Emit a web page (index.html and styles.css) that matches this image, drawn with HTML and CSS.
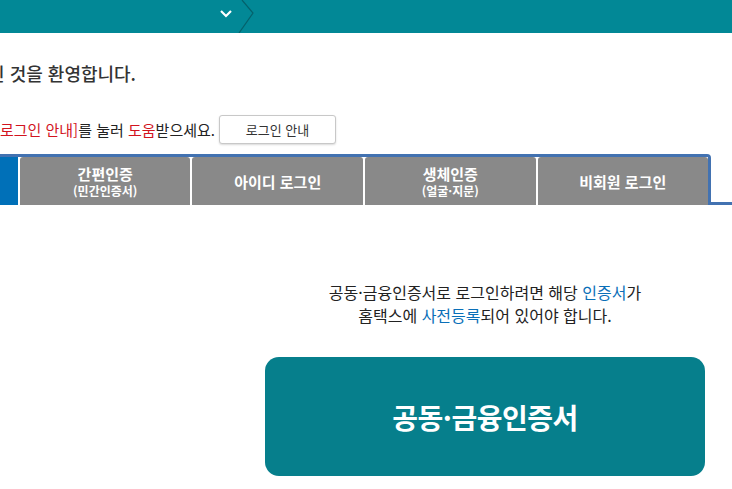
FILE: index.html
```html
<!DOCTYPE html>
<html lang="ko">
<head>
  <meta charset="UTF-8">
  <title>홈택스 로그인</title>
  <link rel="stylesheet" href="styles.css">
</head>
<body>

<div class="topbar">
  <svg class="topbar-arrows" width="260" height="33" viewBox="0 0 260 33">
    <polyline points="221,11 226,16 231,11" fill="none" stroke="#fff" stroke-width="2.2"/>
    <polyline points="242,0 253,13 239,33" fill="none" stroke="#05616b" stroke-width="1.2"/>
  </svg>
</div>

<div class="intro">
  <div class="intro-line welcome">
    <h2>홈택스에 오신 것을 환영합니다.</h2>
  </div>
  <div class="intro-line help">
    <p>로그인이 어려우시면 <span class="red">[로그인 안내]</span>를 눌러 <span class="red">도움</span>받으세요.</p>
    <button class="guide-btn">로그인 안내</button>
  </div>
</div>

<div class="tab-row">
  <div class="tabs">
    <div class="tab active"></div>
    <div class="tab">간편인증<small>(민간인증서)</small></div>
    <div class="tab big">아이디 로그인</div>
    <div class="tab">생체인증<small>(얼굴·지문)</small></div>
    <div class="tab big">비회원 로그인</div>
  </div>
  <div class="tab-rest"></div>
</div>

<div class="panel">
  <div class="panel-left"></div>
  <div class="panel-right">
    <p class="notice">공동·금융인증서로 로그인하려면 해당 <span class="blue">인증서</span>가<br>홈택스에 <span class="blue">사전등록</span>되어 있어야 합니다.</p>
    <button class="cert-btn">공동·금융인증서</button>
  </div>
</div>

</body>
</html>
```

FILE: styles.css
```css
* {
  box-sizing: border-box;
  margin: 0;
  padding: 0;
}

body {
  font-family: "Noto Sans CJK KR", "Noto Sans", sans-serif;
  color: #222;
  background: #fff;
  width: 732px;
  overflow: hidden;
}

.topbar {
  height: 33px;
  background: #028896;
}

.topbar-arrows {
  display: block;
}

.intro-line {
  display: flex;
  justify-content: flex-end;
  white-space: nowrap;
}

.welcome {
  width: 136px;
  margin-top: 27px;
}

.welcome h2 {
  font-size: 18px;
  font-weight: 500;
  line-height: 26px;
  color: #333;
}

.help {
  width: 336px;
  margin-top: 29px;
  align-items: center;
  height: 29px;
}

.help p {
  font-size: 15px;
  color: #222;
}

.red {
  color: #d2141e;
}

.guide-btn {
  flex-shrink: 0;
  margin-left: 4px;
  width: 117px;
  height: 29px;
  background: #fff;
  border: 1px solid #c8c8c8;
  border-radius: 3px;
  box-shadow: 0 1px 2px rgba(0,0,0,0.15);
  font-family: inherit;
  font-size: 13px;
  color: #333;
}

.tab-row {
  display: flex;
  margin-top: 10px;
}

.tabs {
  display: flex;
  width: 711px;
  border-top: 3px solid #4272b1;
  border-right: 3px solid #4272b1;
  border-top-right-radius: 4px;
}

.tab-rest {
  flex: 1;
  border-bottom: 3px solid #4272b1;
}

.tab {
  width: 171px;
  height: 48px;
  margin-right: 2px;
  background: #898989;
  color: #fff;
  border-radius: 3px 3px 0 0;
  font-size: 15px;
  font-weight: 700;
  line-height: 19px;
  display: flex;
  flex-direction: column;
  align-items: center;
  justify-content: center;
}

.tab:last-child {
  margin-right: 0;
}

.tab small {
  font-size: 12px;
  line-height: 15px;
  font-weight: 700;
}

.tab.active {
  width: 18px;
  background: #0070b8;
  border-radius: 0;
}

.panel {
  display: flex;
}

.panel-left {
  width: 265px;
}

.panel-right {
  width: 440px;
  padding-top: 76px;
  text-align: center;
}

.notice {
  font-size: 16px;
  line-height: 23px;
  color: #222;
}

.blue {
  color: #0a6fb8;
}

.cert-btn {
  display: block;
  margin-top: 30px;
  width: 440px;
  height: 119px;
  border: none;
  border-radius: 14px;
  background: #067f8c;
  color: #fff;
  font-family: inherit;
  font-size: 28px;
  font-weight: 700;
  letter-spacing: -0.5px;
}
```
